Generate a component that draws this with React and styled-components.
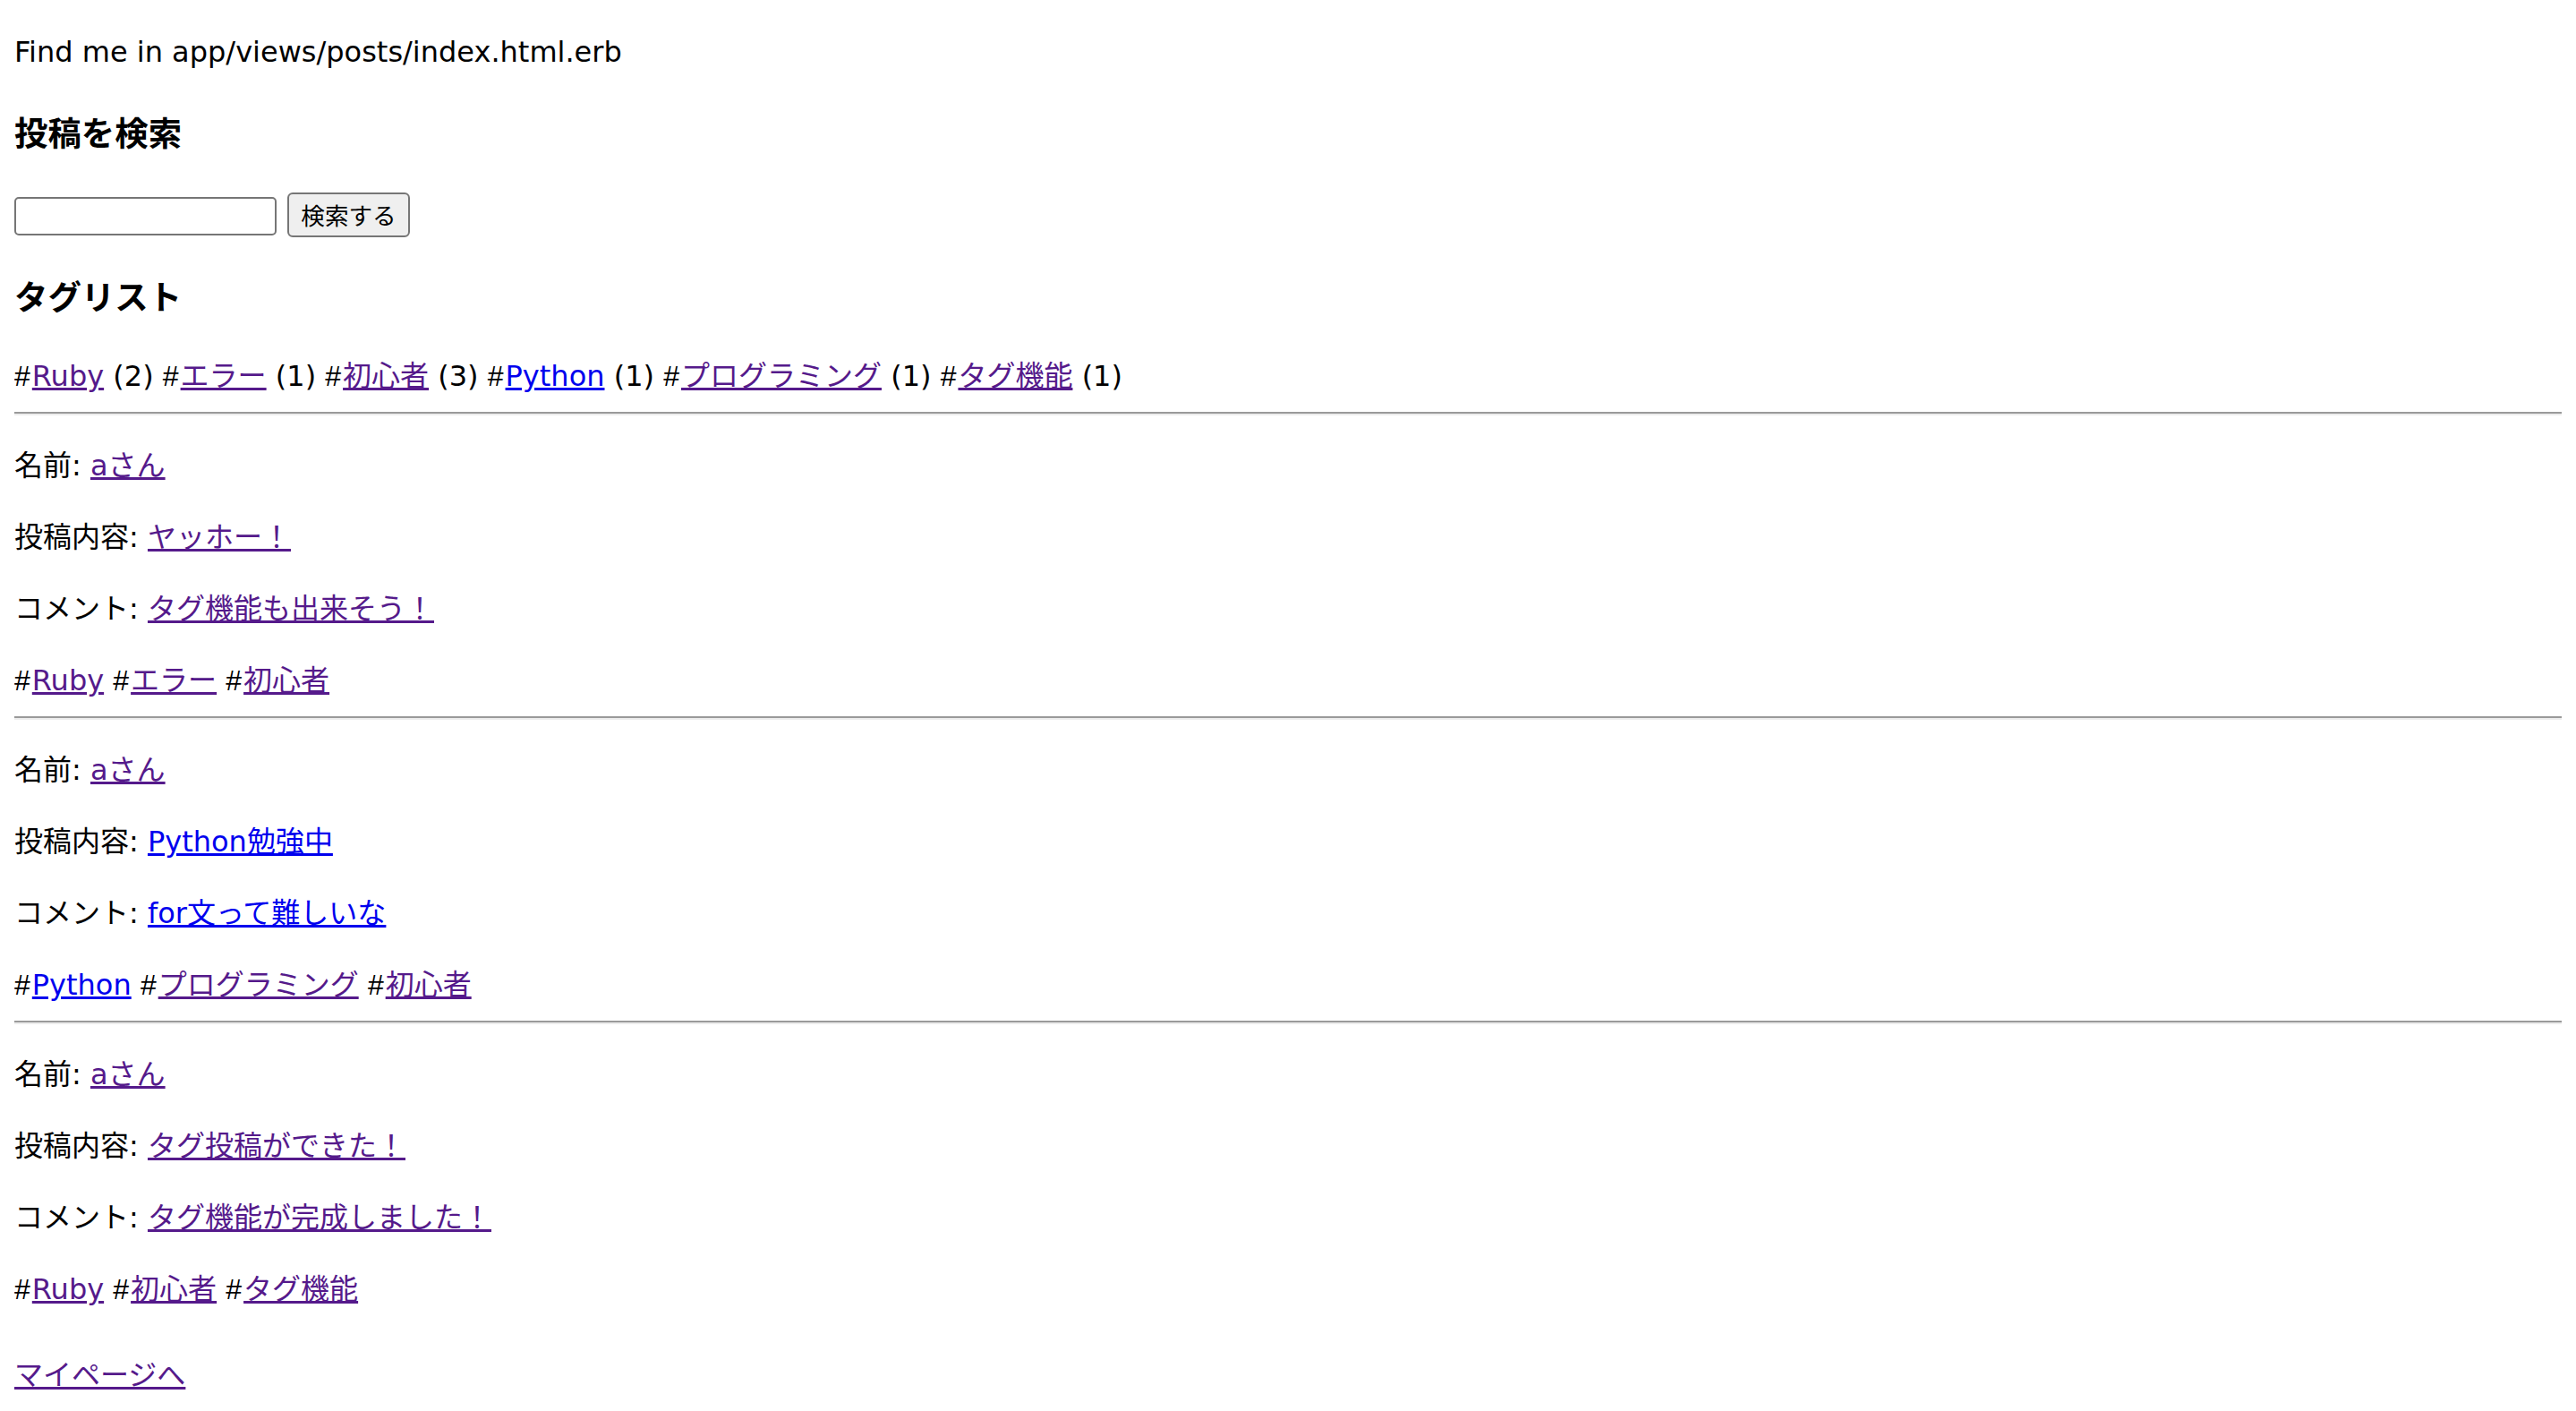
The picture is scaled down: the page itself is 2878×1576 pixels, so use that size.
import React from "react";
import styled, { createGlobalStyle } from "styled-components";

const GlobalStyle = createGlobalStyle`
  html {
    overflow: hidden;
  }
  body {
    margin: 16px;
    background: #ffffff;
    color: #000000;
    font-family: "DejaVu Sans", "Noto Sans CJK JP", sans-serif;
    font-size: 32px;
    line-height: 1.5;
  }
`;

const Page = styled.div`
  display: block;
`;

const Intro = styled.p`
  margin: 18px 0 32px;
`;

const Heading = styled.h3`
  font-family: "Noto Sans CJK JP", sans-serif;
  font-size: 1.17em;
  font-weight: bold;
  line-height: 1.5;
  margin: 1em 0;
`;

const SearchForm = styled.form`
  display: flex;
  align-items: flex-end;
  gap: 12px;
  height: 52px;
`;

const SearchInput = styled.input`
  box-sizing: border-box;
  width: 293px;
  height: 43px;
  margin: 0 0 2px;
  padding: 2px 4px;
  border: 2px solid #767676;
  border-radius: 5px;
  background: #ffffff;
  font-size: 26px;
`;

const SearchButton = styled.button`
  box-sizing: border-box;
  width: 137px;
  height: 50px;
  padding: 0;
  border: 2px solid #767676;
  border-radius: 6px;
  background: #efefef;
  color: #000000;
  font-family: "Noto Sans CJK JP", sans-serif;
  font-size: 26.6px;
  line-height: 1;
`;

const TagLine = styled.div`
  margin: 0;
`;

const Hash = styled.span`
  font-family: "Liberation Sans", sans-serif;
  margin-right: 2px;
`;

const Link = styled.a`
  color: ${(p) => (p.$fresh ? "#0000ee" : "#551a8b")};
  text-decoration: underline;
  text-underline-offset: 2px;
`;

const Rule = styled.hr`
  height: 0;
  margin: 16px 0;
  border: none;
  border-top: 2px solid #9a9a9a;
  border-bottom: 2px solid #ededed;
`;

const Post = styled.article`
  display: block;
`;

const Field = styled.p`
  margin: 32px 0;
`;

const Footer = styled.p`
  margin: 48px 0 0;
`;

const tagCounts = [
  { name: "Ruby", count: 2 },
  { name: "エラー", count: 1 },
  { name: "初心者", count: 3 },
  { name: "Python", count: 1, fresh: true },
  { name: "プログラミング", count: 1 },
  { name: "タグ機能", count: 1 },
];

const posts = [
  {
    body: "ヤッホー！",
    comment: "タグ機能も出来そう！",
    tags: [{ name: "Ruby" }, { name: "エラー" }, { name: "初心者" }],
  },
  {
    body: "Python勉強中",
    comment: "for文って難しいな",
    fresh: true,
    tags: [{ name: "Python", fresh: true }, { name: "プログラミング" }, { name: "初心者" }],
  },
  {
    body: "タグ投稿ができた！",
    comment: "タグ機能が完成しました！",
    tags: [{ name: "Ruby" }, { name: "初心者" }, { name: "タグ機能" }],
  },
];

export default function App() {
  return (
    <Page>
      <GlobalStyle />
      <Intro>Find me in app/views/posts/index.html.erb</Intro>

      <Heading>投稿を検索</Heading>
      <SearchForm onSubmit={(e) => e.preventDefault()}>
        <SearchInput type="text" />
        <SearchButton type="submit">検索する</SearchButton>
      </SearchForm>

      <Heading>タグリスト</Heading>
      <TagLine>
        {tagCounts.map((t, i) => (
          <React.Fragment key={t.name}>
            {i > 0 && " "}
            <Hash>#</Hash>
            <Link href="#" $fresh={t.fresh}>{t.name}</Link> ({t.count})
          </React.Fragment>
        ))}
      </TagLine>

      {posts.map((post, i) => (
        <React.Fragment key={i}>
          <Rule />
          <Post>
            <Field>
              名前: <Link href="#">aさん</Link>
            </Field>
            <Field>
              投稿内容: <Link href="#" $fresh={post.fresh}>{post.body} </Link>
            </Field>
            <Field>
              コメント: <Link href="#" $fresh={post.fresh}>{post.comment} </Link>
            </Field>
            <TagLine>
              {post.tags.map((t, j) => (
                <React.Fragment key={t.name}>
                  {j > 0 && " "}
                  <Hash>#</Hash>
                  <Link href="#" $fresh={t.fresh}>{t.name}</Link>
                </React.Fragment>
              ))}
            </TagLine>
          </Post>
        </React.Fragment>
      ))}

      <Footer>
        <Link href="#">マイページへ</Link>
      </Footer>
    </Page>
  );
}
